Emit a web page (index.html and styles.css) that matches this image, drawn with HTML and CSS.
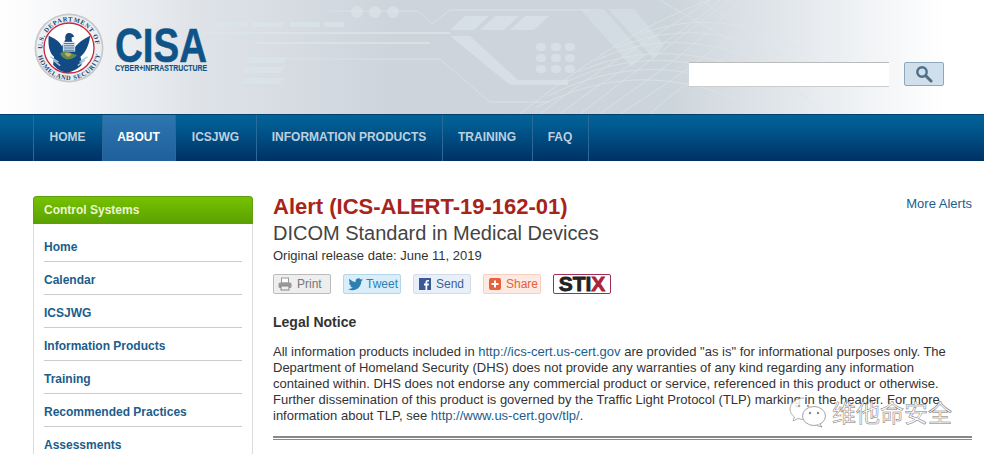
FILE: index.html
```html
<!DOCTYPE html>
<html lang="en">
<head>
  <meta charset="UTF-8" />
  <title>Alert (ICS-ALERT-19-162-01) | CISA</title>
  <link rel="stylesheet" href="styles.css">
</head>
<body>

  <!-- Header -->
  <div class="site-header">
    <svg class="header-art" viewBox="0 0 984 114" aria-hidden="true">
      <g fill="#dbe6ea" opacity="0.65">
        <rect x="217" y="22" width="30" height="5"/><rect x="253" y="22" width="30" height="5"/><rect x="290" y="22" width="30" height="5"/><rect x="324" y="22" width="20" height="5"/>
        <circle cx="357" cy="12" r="6"/><circle cx="375" cy="12" r="6"/><circle cx="393" cy="12" r="6"/>
        <path d="M450 30l15-14h24l-15 14zM480 30l15-14h24l-15 14zM510 30l15-14h24l-15 14z"/>
        <path d="M245 63l6-6h14l-6 6zM259 63l6-6h14l-6 6zM273 63l6-6h10l-6 6zM241 73l6-6h14l-6 6zM255 73l6-6h14l-6 6zM269 73l6-6h10l-6 6zM240 84l6-6h14l-6 6zM254 84l6-6h14l-6 6zM268 84l6-6h10l-6 6z"/>
        <rect x="536" y="43" width="10" height="8" rx="4"/><rect x="551" y="43" width="10" height="8" rx="4"/><rect x="565" y="43" width="10" height="8" rx="4"/>
        <rect x="536" y="54" width="10" height="8" rx="4"/><rect x="551" y="54" width="10" height="8" rx="4"/><rect x="565" y="54" width="10" height="8" rx="4"/>
        <rect x="536" y="65" width="10" height="8" rx="4"/><rect x="551" y="65" width="10" height="8" rx="4"/><rect x="565" y="65" width="10" height="8" rx="4"/>
        <path d="M450 36h20l48 44h50v5h-58z"/>
        <path d="M580 9h24l40 46-12 12zM608 9h26l30 36-10 14z" opacity="0.7"/>
      </g>
      <g fill="none" stroke="#dbe8ea" opacity="0.7">
        <path d="M202 33h248" stroke-width="2"/>
        <path d="M256 43h174" stroke-width="2"/>
        <path d="M290 59h150l50 43h60"/>
        <path d="M330 11h88l14 13 18-14h140"/>
        <path d="M520 114c50-40 120-90 190-114M540 114c50-40 120-80 170-114M560 114c50-40 110-70 160-114M580 114c40-30 90-70 150-114M600 114c40-30 90-60 140-114M620 114c30-20 80-50 130-96M650 114c30-30 70-50 100-76"/>
        <path d="M535 108c60-30 120-40 200-10M548 96c60-30 130-40 210 0M562 84c60-30 130-36 220 10M578 72c60-26 130-30 230 26M596 60c60-26 120-26 210 22M616 48c60-24 110-20 180 14M640 34c60-20 100-14 160 14"/>
        <path d="M660 0c30 20 120 60 160 114M700 0c30 20 90 60 120 80"/>
      </g>
    </svg>

    <a class="logo" href="#">
      <svg class="seal" viewBox="0 0 72 72" role="img" aria-label="U.S. Department of Homeland Security">
        <defs>
          <path id="seal-top" d="M9.600 40A26.700 26.700 0 1 1 62.400 40"/>
          <path id="seal-bottom" d="M4 36a32 32 0 0 0 64 0"/>
        </defs>
        <circle cx="36" cy="36" r="34.500" fill="#c6c8cb"/>
        <circle cx="36" cy="36" r="32.800" fill="#eceef0"/>
        <text class="seal-text"><textPath href="#seal-top" startOffset="3">U.S. DEPARTMENT OF</textPath></text>
        <text class="seal-text"><textPath href="#seal-bottom" startOffset="8">HOMELAND SECURITY</textPath></text>
        <circle cx="36" cy="36" r="25" fill="#fff" stroke="#c5283d" stroke-width="1.300"/>
        <g transform="translate(36 36) scale(0.880) translate(-36 -36)">
          <path d="M13 22c6 3 12 6 15 12l4-8c-1-4 1-7 4-7s5 2 6 4l-3 1v3l4 8c4-6 10-9 17-13-1 9-4 18-11 24 1 4 2 7 1 10-6 5-10 7-16 8-7-1-11-3-16-9 0-3 1-6 1-9-6-5-7-15-6-24z" fill="#124a84"/>
          <rect x="29" y="29" width="14" height="11" fill="#e3ebf1"/>
          <path d="M30 31h12M30 33.500h12M30 36h12M30 38.500h12" stroke="#124a84" stroke-width="0.900"/>
          <path d="M26 42c4-2 7-2 10-1 3 1 6 2 9 3-3 4-8 5-11 5-4-1-7-3-8-7z" fill="#5f8a52"/>
          <path d="M31 42c3-1 5-1 8 1l-3 3c-2 0-4-2-5-4z" fill="#c9b34a"/>
          <path d="M15 46l9 6M57 46l-9 6M18 50l8 6M54 50l-8 6" stroke="#a9c3d6" stroke-width="1.500"/>
        </g>
      </svg>
      <svg class="wordmark" viewBox="0 0 94 48" role="img" aria-label="CISA Cyber+Infrastructure">
        <text class="wordmark-big" x="0" y="36" textLength="92" lengthAdjust="spacingAndGlyphs">CISA</text>
        <text class="wordmark-small" x="0" y="44.500" textLength="92" lengthAdjust="spacingAndGlyphs">CYBER+INFRASTRUCTURE</text>
      </svg>
    </a>

    <form class="search">
      <input class="search-input" type="text" />
      <button class="search-btn" type="button" aria-label="Search">
        <svg viewBox="0 0 18 18" width="18" height="18"><circle cx="7" cy="7" r="4.700" fill="none" stroke="#4f6f88" stroke-width="2.400"/><path d="M10.500 10.500l5.500 5.500" stroke="#4f6f88" stroke-width="3" stroke-linecap="round"/></svg>
      </button>
    </form>
  </div>

  <!-- Nav -->
  <div class="main-nav">
    <a class="nav-item nav-home" href="#">HOME</a>
    <a class="nav-item nav-about active" href="#">ABOUT</a>
    <a class="nav-item nav-ics" href="#">ICSJWG</a>
    <a class="nav-item nav-info" href="#">INFORMATION PRODUCTS</a>
    <a class="nav-item nav-training" href="#">TRAINING</a>
    <a class="nav-item nav-faq" href="#">FAQ</a>
  </div>

  <div class="page">

    <!-- Sidebar -->
    <div class="sidebar">
      <div class="sidebar-title">Control Systems</div>
      <ul class="sidebar-list">
        <li><a href="#">Home</a></li>
        <li><a href="#">Calendar</a></li>
        <li><a href="#">ICSJWG</a></li>
        <li><a href="#">Information Products</a></li>
        <li><a href="#">Training</a></li>
        <li><a href="#">Recommended Practices</a></li>
        <li><a href="#">Assessments</a></li>
      </ul>
    </div>

    <!-- Content -->
    <div class="content">
      <div class="title-row">
        <h1 class="alert-title">Alert (ICS-ALERT-19-162-01)</h1>
        <a class="more-alerts" href="#">More Alerts</a>
      </div>
      <h2 class="alert-sub">DICOM Standard in Medical Devices</h2>
      <div class="release-date">Original release date: June 11, 2019</div>

      <div class="share-row">
        <a class="share-btn print" href="#">
          <svg viewBox="0 0 14 14" width="14" height="14"><rect x="3.500" y="1" width="7" height="5" fill="#fff" stroke="#999"/><rect x="0.500" y="5.500" width="13" height="5.500" rx="1.500" fill="#999"/><rect x="3" y="9" width="8" height="4" fill="#eee" stroke="#888"/></svg>
          Print
        </a>
        <a class="share-btn tweet" href="#">
          <svg viewBox="0 0 16 14" width="15" height="13"><path d="M16 2c-.6.300-1.200.400-1.800.500.700-.400 1.200-1 1.400-1.800-.6.400-1.300.600-2 .800C13 .800 12.200.400 11.300.400 9.500.400 8.100 1.800 8.100 3.600c0 .300 0 .500.100.700C5.500 4.200 3.100 2.900 1.500.900c-.3.500-.4 1-.4 1.600 0 1.100.6 2.100 1.400 2.700-.5 0-1-.2-1.500-.4 0 1.600 1.100 2.900 2.600 3.200-.5.100-1 .200-1.400.100.400 1.300 1.600 2.200 3 2.200C4.100 11.300 2.200 12 0 11.800 1.400 12.700 3.100 13.200 4.900 13.200c6 0 9.300-5 9.300-9.300v-.4c.7-.4 1.300-1 1.800-1.500z" fill="#2c7fb0"/></svg>
          Tweet
        </a>
        <a class="share-btn send" href="#">
          <svg viewBox="0 0 12 12" width="12" height="12"><rect width="12" height="12" fill="#3b5998"/><path d="M8.200 12V7.400h1.500l.2-1.800H8.200V4.500c0-.5.200-.9.900-.9h.9V2c-.2 0-.7-.1-1.300-.1-1.300 0-2.200.8-2.200 2.300v1.400H5v1.800h1.500V12z" fill="#fff"/></svg>
          Send
        </a>
        <a class="share-btn share" href="#">
          <svg viewBox="0 0 12 12" width="12" height="12"><rect width="12" height="12" rx="2" fill="#e8603c"/><path d="M6 2.500v7M2.500 6h7" stroke="#fff" stroke-width="2"/></svg>
          Share
        </a>
        <a class="stix-btn" href="#">STI<span class="stix-x">X</span></a>
      </div>

      <h3 class="notice-title">Legal Notice</h3>
      <p class="notice-text">All information products included in <a href="#">http://ics-cert.us-cert.gov</a> are provided "as is" for informational purposes only. The Department of Homeland Security (DHS) does not provide any warranties of any kind regarding any information contained within. DHS does not endorse any commercial product or service, referenced in this product or otherwise. Further dissemination of this product is governed by the Traffic Light Protocol (TLP) marking in the header. For more information about TLP, see <a href="#">http://www.us-cert.gov/tlp/</a>.</p>
      <div class="double-rule"></div>
    </div>
  </div>

  <!-- Watermark -->
  <div class="watermark">
    <svg viewBox="0 0 38 32" width="38" height="32" aria-hidden="true">
      <path d="M15 2C7 2 1 7 1 13c0 3.500 2 6 4.500 8L4 25l5-2.500c2 .7 4 1 6 1 1 0 2 0 3-.2" fill="rgba(255,255,255,.85)" stroke="#9a9a9a" stroke-width="0.800"/>
      <ellipse cx="25" cy="20" rx="11.500" ry="9.500" fill="rgba(255,255,255,.9)" stroke="#8a8a8a" stroke-width="0.800"/>
      <path d="M31 28l2 3-5-1.500" fill="#fff" stroke="#8a8a8a" stroke-width="0.800"/>
      <circle cx="21" cy="17" r="1.200" fill="#888"/><circle cx="29" cy="17" r="1.200" fill="#888"/>
      <circle cx="10" cy="10" r="1.300" fill="#aaa"/><circle cx="19" cy="10" r="1.300" fill="#aaa"/>
    </svg>
    <span class="watermark-text">维他命安全</span>
  </div>

</body>
</html>
```

FILE: styles.css
```css
html, body {
  margin: 0;
  height: 100%;
  overflow: hidden;
  background: #fff;
  font-family: "Liberation Sans", Arial, sans-serif;
  color: #333;
}

a {
  text-decoration: none;
  color: #1b5d8c;
}

/* HEADER */
.site-header {
  position: relative;
  height: 114px;
  display: flex;
  justify-content: space-between;
  align-items: flex-start;
  background: linear-gradient(90deg, #fff 0%, #dfe3e8 20%, #cdd4dc 40%, #cdd5dc 68%, #e6eaee 82%, #fff 96%);
}

.header-art {
  position: absolute;
  top: 0;
  left: 0;
  width: 984px;
  height: 114px;
}

.logo {
  position: relative;
  display: flex;
  align-items: flex-start;
  gap: 10px;
  padding: 12px 0 0 33px;
}

.seal {
  width: 72px;
  height: 72px;
}

.wordmark {
  width: 94px;
  height: 48px;
  margin-top: 14px;
}

.wordmark-big {
  font: bold 49px "Liberation Sans", sans-serif;
  fill: #0f5488;
  stroke: #0f5488;
  stroke-width: 0.500px;
}

.wordmark-small {
  font: bold 9.500px "Liberation Sans", sans-serif;
  fill: #0f5488;
  stroke: #0f5488;
  stroke-width: 0.150px;
}

.seal-text {
  font: bold 6.500px "Liberation Serif", serif;
  fill: #1c4470;
  letter-spacing: 0.700px;
}

.search {
  position: relative;
  display: flex;
  align-items: flex-start;
  gap: 15px;
  padding: 62px 40px 0 0;
}

.search-input {
  width: 200px;
  height: 25px;
  box-sizing: border-box;
  border: none;
  border-top: 1px solid #bbb;
  border-bottom: 1px solid #ccc;
  background: #fff;
  padding: 0 4px;
}

.search-btn {
  width: 40px;
  height: 24px;
  box-sizing: border-box;
  padding: 0;
  border: 1px solid #8fa9bb;
  border-radius: 2px;
  background: #cfe0ec;
  display: flex;
  align-items: center;
  justify-content: center;
}

/* NAV */
.main-nav {
  height: 47px;
  box-sizing: border-box;
  padding-left: 33px;
  display: flex;
  border-top: 1px solid #00416f;
  background: linear-gradient(180deg, #006399 0%, #005a90 25%, #003164 100%);
}

.nav-item {
  display: flex;
  align-items: center;
  justify-content: center;
  box-sizing: border-box;
  padding: 0 1px 2px 0;
  border-left: 1px solid #2a6a9a;
  font-size: 12px;
  font-weight: bold;
  color: #bcd0e0;
}

.nav-home { width: 69px; }
.nav-about { width: 73px; }
.nav-ics { width: 81px; }
.nav-info { width: 186px; }
.nav-training { width: 90px; }
.nav-faq { width: 57px; border-right: 1px solid #2a6a9a; }

.nav-item.active {
  color: #fff;
  background: linear-gradient(180deg, #2d76b0 0%, #1f5f9c 100%);
}

/* PAGE */
.page {
  display: flex;
  align-items: flex-start;
  gap: 20px;
  padding: 35px 12px 0 33px;
}

.sidebar {
  flex: 0 0 220px;
  box-sizing: border-box;
  border: 1px solid #dcdcdc;
  border-top: none;
  border-radius: 4px 4px 0 0;
}

.sidebar-title {
  margin: 0 -1px;
  height: 28px;
  line-height: 27px;
  padding-left: 10px;
  border-radius: 4px 4px 0 0;
  background: linear-gradient(180deg, #76c200 0%, #5aa000 100%);
  border: 1px solid #5f9f10;
  border-bottom: none;
  box-sizing: border-box;
  font-size: 12px;
  font-weight: bold;
  color: #eaf6cf;
}

.sidebar-list {
  list-style: none;
  margin: 0;
  padding: 5px 10px 0;
}

.sidebar-list li {
  height: 32px;
  line-height: 37px;
  border-bottom: 1px solid #ccc;
  font-size: 12px;
  font-weight: bold;
}

.content {
  flex: 1;
  min-width: 0;
}

.title-row {
  display: flex;
  justify-content: space-between;
  align-items: flex-start;
}

.alert-title {
  margin: 0;
  font-size: 22px;
  line-height: 22px;
  font-weight: bold;
  color: #a6241c;
}

.more-alerts {
  font-size: 13px;
  line-height: 16px;
}

.alert-sub {
  margin: 3px 0 0;
  font-size: 20px;
  line-height: 24px;
  font-weight: normal;
  color: #444;
}

.release-date {
  margin-top: 3px;
  font-size: 13px;
  line-height: 16px;
}

.share-row {
  display: flex;
  gap: 12px;
  margin-top: 10px;
}

.share-btn {
  width: 58px;
  height: 20px;
  box-sizing: border-box;
  padding-left: 4px;
  border: 1px solid #ccc;
  border-radius: 2px;
  display: flex;
  align-items: center;
  gap: 5px;
  font-size: 12px;
}

.print { background: #eee; color: #777; border-color: #bbb; }
.tweet { background: #daeefa; color: #2c7fb0; border-color: #b5d6e8; gap: 3px; }
.send { background: #e9eff8; color: #3d5f95; border-color: #d3dcea; padding-left: 5px; }
.share { background: #fdeae2; color: #e8603c; border-color: #f6cfc0; padding-left: 5px; }

.stix-btn {
  width: 58px;
  height: 20px;
  box-sizing: border-box;
  border: 1px solid #a02c5a;
  border-radius: 2px;
  text-align: center;
  font-size: 21px;
  line-height: 18px;
  font-weight: bold;
  color: #222;
  -webkit-text-stroke: 0.800px #222;
}

.stix-x {
  color: #a8243c;
  -webkit-text-stroke: 0.800px #a8243c;
}

.notice-title {
  margin: 20px 0 0;
  font-size: 14px;
  line-height: 16px;
  font-weight: bold;
}

.notice-text {
  margin: 14px 0 0;
  font-size: 13px;
  line-height: 16px;
}

.double-rule {
  margin-top: 12px;
  height: 4px;
  box-sizing: border-box;
  border-top: 2px solid #888;
  border-bottom: 1px solid #888;
}

/* WATERMARK */
.watermark {
  position: absolute;
  left: 789px;
  top: 396px;
  display: flex;
  align-items: center;
  gap: 5px;
}

.watermark-text {
  font-family: "Noto Sans CJK SC", sans-serif;
  font-size: 24px;
  line-height: 32px;
  color: #fff;
  -webkit-text-stroke: 0.500px #777;
}
```
